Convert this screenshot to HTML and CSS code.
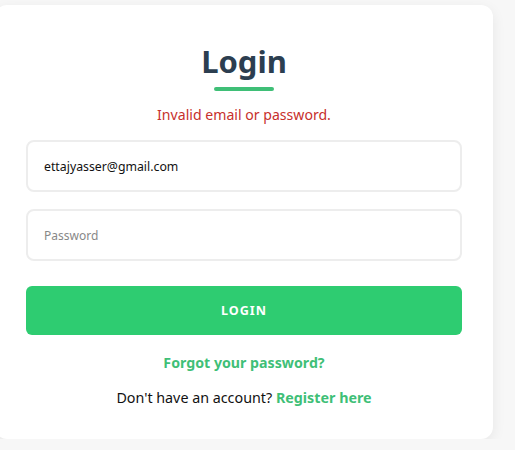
FILE: index.html
```html
<!DOCTYPE html>
<html lang="en">
<head>
  <meta charset="UTF-8" />
  <meta name="viewport" content="width=device-width, initial-scale=1.0"/>
  <title>Login</title>
  <link rel="stylesheet" href="styles.css">
</head>
<body>

  <div class="card">
    <h2 class="title">Login</h2>
    <div class="title-line"></div>

    <p class="error">Invalid email or password.</p>

    <form class="login-form">
      <input type="email" class="field" value="ettajyasser@gmail.com" />
      <input type="password" class="field" placeholder="Password" />
      <button type="submit" class="login-btn">Login</button>
    </form>

    <a href="#" class="forgot">Forgot your password?</a>
    <p class="register">Don't have an account? <a href="#">Register here</a></p>
  </div>

</body>
</html>
```

FILE: styles.css
```css
body {
  margin: 0;
  padding: 5px 0 0;
  background: #f7f7f7;
  font-family: "Noto Sans", "Open Sans", sans-serif;
  overflow: hidden;
}

.card {
  width: 498px;
  box-sizing: border-box;
  margin-left: -5px;
  padding: 36px 31px 32px;
  background: #fff;
  border-radius: 12px;
  box-shadow: 0 4px 14px rgba(0, 0, 0, 0.07);
  text-align: center;
}

.title {
  margin: 0;
  font-size: 31px;
  line-height: 40px;
  font-weight: 700;
  color: #2c3e50;
}

.title-line {
  width: 60px;
  height: 4px;
  margin: 6px auto 0;
  background: #3fbf77;
  border-radius: 2px;
}

.error {
  margin: 14px 0 0;
  font-size: 14.1px;
  line-height: 20px;
  color: #c7302c;
}

.login-form {
  display: flex;
  flex-direction: column;
  gap: 17px;
  margin-top: 15px;
}

.field {
  height: 52px;
  box-sizing: border-box;
  padding: 1px 16px 0;
  border: 2px solid #ededed;
  border-radius: 8px;
  font-family: inherit;
  font-size: 12.3px;
  color: #111;
  outline: none;
}

.field::placeholder {
  color: #888;
  font-size: 12px;
}

.login-btn {
  height: 49px;
  margin-top: 8px;
  border: none;
  border-radius: 6px;
  background: #2ecc71;
  color: #fff;
  font-family: inherit;
  font-size: 12.6px;
  font-weight: 700;
  letter-spacing: 1px;
  text-transform: uppercase;
  cursor: pointer;
}

.forgot {
  display: block;
  margin-top: 18px;
  font-size: 14.2px;
  font-weight: 700;
  color: #3fbf77;
  text-decoration: none;
}

.register {
  margin: 16px 0 0;
  font-size: 14.3px;
  color: #111;
}

.register a {
  font-weight: 700;
  color: #3fbf77;
  text-decoration: none;
}
```
